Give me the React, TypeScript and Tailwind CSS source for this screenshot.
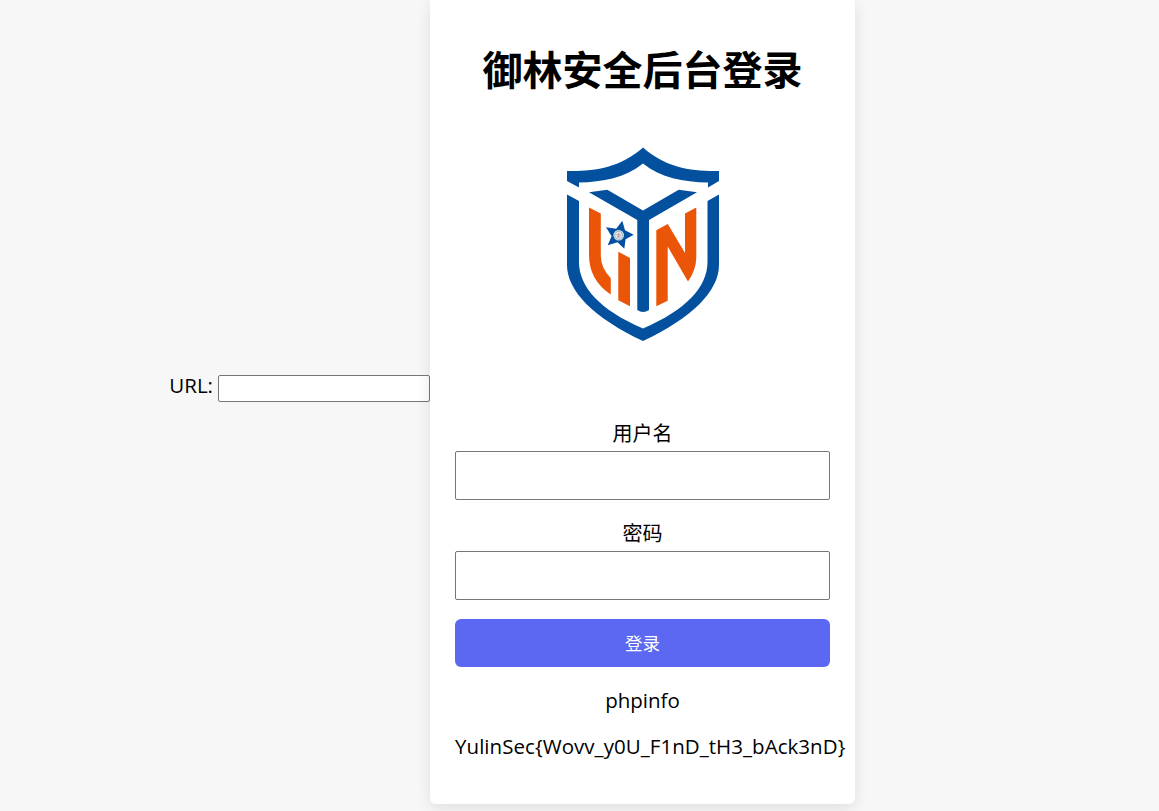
import React from 'react';

interface FieldProps {
    id: string;
    label: string;
    type?: string;
}

function Field({ id, label, type = 'text' }: FieldProps) {
    return (
        <div className="flex flex-col items-center h-[100px]">
            <label htmlFor={id} className="h-[35px] pt-1 text-[20px] leading-[28px]">
                {label}
            </label>
            <input
                id={id}
                type={type}
                className="w-full h-[49px] px-3 bg-white border border-[#767676] rounded-[2px] outline-none"
            />
        </div>
    );
}

function ShieldLogo() {
    return (
        <svg viewBox="555 140 176 210" className="w-[176px] h-[210px] shrink-0" role="img">
            <g fill="#03509f">
                {/* Crown */}
                <path d="M567 171C594 171.5 620 168 643 147.5C666 168 692 171.5 719 171V181L708 187.5V182.5C683 182 661 178 643 163.5C625 178 603 182 579 182.5V187.5L567 181Z" />
                {/* Shield outline */}
                <path d="M567 194.5L579 201V262C579 287 600 310 643 328.5C686 310 707.5 287 707.5 262V201L719 194.5V265C719 291 692 318 643 341C594 318 567 291 567 265Z" />
                {/* Y */}
                <path d="M589 192.3L607.3 189.7L643 210.5L678.7 189.7L697 192.3L649 220V310Q643 314 637.3 310V220Z" />
                {/* Star */}
                <path d="M633.7 234.7L625.6 239.2L624.3 248.7L617.5 242.3L607.7 245.2L611.6 236.3L606 227.3L616.2 228.8L622.3 220.7L625 230.3Z" />
            </g>
            <circle cx="618.7" cy="235.3" r="5.3" fill="#dfe8ed" />
            <circle cx="618.7" cy="235.3" r="4" fill="none" stroke="#5f90b0" strokeWidth="1" strokeDasharray="1 0.6" />
            <path d="M616.2 234.8H621.2M618.7 232.8V237.8M617 236.8H620.4" stroke="#b58b82" strokeWidth="0.7" />
            <g fill="#ea5507">
                <path d="M589 207.5L600.8 213.5V256Q601 268 610.8 278.3V294.5Q589 280 589 255Z" />
                <path d="M618.3 251.7L630 258V306.3L618.3 300.3Z" />
                <path d="M656.3 230.3L667.8 224L685 253V213.5L696.3 207.5V258Q696 270 688 281.5L667.7 246.5V300.7L656.3 306.3Z" />
            </g>
        </svg>
    );
}

export default function App() {
    return (
        <div className="flex h-[811px] w-full overflow-hidden bg-[#f7f7f7] text-black font-['Open_Sans','Noto_Sans_CJK_SC',sans-serif]">
            <div className="flex w-[430px] shrink-0 items-start justify-end pt-[375px]">
                <label htmlFor="url" className="mr-[5px] -mt-1 text-[20.5px] leading-[28px]">URL:</label>
                <input
                    id="url"
                    type="text"
                    className="w-[212px] h-[27px] px-1 bg-white border border-[#767676] rounded-[2px] outline-none"
                />
            </div>

            <div className="flex flex-col items-center w-[425px] h-[804px] shrink-0 px-[25px] bg-white rounded-b-[6px] shadow-[0_4px_15px_rgba(0,0,0,0.1)]">
                <h1 className="mt-[40px] h-[100px] text-[40px] leading-[60px] font-bold whitespace-nowrap">御林安全后台登录</h1>
                <ShieldLogo />

                <form className="w-full mt-[66px]" onSubmit={(e) => e.preventDefault()}>
                    <Field id="username" label="用户名" />
                    <Field id="password" label="密码" type="password" />
                    <button type="submit" className="block w-full h-[48px] mt-[3px] rounded-[6px] bg-[#5c67f2] text-white text-[17.5px]">
                        登录
                    </button>
                </form>

                <p className="mt-[19px] text-[20.5px] leading-[28px]">phpinfo</p>
                <p className="mt-[18px] self-start text-[20.5px] leading-[28px] tracking-[0.05px] whitespace-nowrap">YulinSec&#123;Wovv_y0U_F1nD_tH3_bAck3nD&#125;</p>
            </div>
        </div>
    );
}
